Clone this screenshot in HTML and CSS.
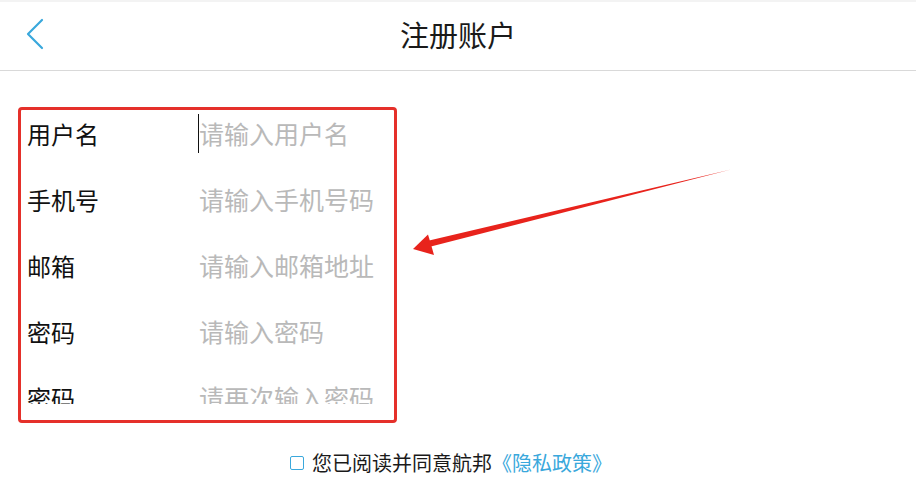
FILE: index.html
```html
<!DOCTYPE html>
<html lang="zh-CN">
<head>
<meta charset="UTF-8" />
<meta name="viewport" content="width=device-width, initial-scale=1" />
<title>注册账户</title>
<link rel="stylesheet" href="styles.css">
</head>
<body>

<header class="cabecera">
  <a class="volver" href="#">
    <svg width="20" height="32" viewBox="0 0 20 32">
      <polyline points="17,2 3,16 17,30" fill="none" stroke="#3aa8dc" stroke-width="2.2" stroke-linecap="round" stroke-linejoin="round"/>
    </svg>
  </a>
  <h1 class="titulo">注册账户</h1>
</header>

<main class="contenido">
  <div class="formulario">
    <div class="lista">
      <div class="fila">
        <span class="etiqueta">用户名</span>
        <span class="campo activo">请输入用户名</span>
      </div>
      <div class="fila">
        <span class="etiqueta">手机号</span>
        <span class="campo">请输入手机号码</span>
      </div>
      <div class="fila">
        <span class="etiqueta">邮箱</span>
        <span class="campo">请输入邮箱地址</span>
      </div>
      <div class="fila">
        <span class="etiqueta">密码</span>
        <span class="campo">请输入密码</span>
      </div>
      <div class="fila">
        <span class="etiqueta">密码</span>
        <span class="campo">请再次输入密码</span>
      </div>
    </div>
  </div>

  <div class="acuerdo">
    <span class="casilla"></span>
    <span>您已阅读并同意航邦</span><a class="enlace" href="#">《隐私政策》</a>
  </div>
</main>

<!-- flecha de anotación sobre la captura -->
<svg class="flecha" width="916" height="487" viewBox="0 0 916 487">
  <polygon points="429,247 427,241 731,169.5" fill="#e8231c"/>
  <polygon points="413,249 428,234.5 431,244.5 434,255" fill="#e8231c"/>
</svg>

</body>
</html>
```

FILE: styles.css
```css
html, body {
  margin: 0;
  height: 100%;
  background: #fff;
  font-family: "Noto Sans CJK SC", "Noto Sans", sans-serif;
  color: #111;
  overflow: hidden;
}

/* Barra superior */
.cabecera {
  position: relative;
  height: 68px;
  border-top: 2px solid #f3f3f3;
  border-bottom: 1px solid #d9d9d9;
  display: flex;
  align-items: center;
  justify-content: center;
}

.volver {
  position: absolute;
  left: 25px;
  top: 16px;
  display: flex;
}

.titulo {
  margin: 0 0 4px;
  font-size: 29px;
  font-weight: normal;
  line-height: 1;
  color: #1a1a1a;
}

.contenido {
  padding: 36px 0 0 18px;
}

/* Caja roja con los campos */
.formulario {
  width: 373px;
  height: 310px;
  border: 3px solid #e5302a;
  border-radius: 4px;
}

.lista {
  height: 294px;
  overflow: hidden;
  display: flex;
  flex-direction: column;
  gap: 14px;
  padding-left: 6px;
}

.fila {
  flex: 0 0 52px;
  display: flex;
  align-items: center;
  font-size: 24px;
  margin-top: -3px;
  margin-bottom: 3px;
}

.etiqueta {
  width: 172px;
  flex: 0 0 172px;
  color: #111;
}

.campo {
  color: #b9b9b9;
  font-size: 25px;
  position: relative;
}

.campo.activo::before {
  content: "";
  position: absolute;
  left: -1px;
  top: -1px;
  bottom: -2px;
  border-left: 1.5px solid #111;
}

/* Aceptación de la política */
.acuerdo {
  margin: 25px 0 0 -18px;
  display: flex;
  align-items: center;
  justify-content: center;
  font-size: 20px;
  color: #1a1a1a;
  padding-right: 14px;
}

.casilla {
  width: 12px;
  height: 12px;
  border: 1.5px solid #3aa8dc;
  border-radius: 2px;
  margin-right: 8px;
}

.enlace {
  color: #3aa8dc;
  text-decoration: none;
  font-size: 20px;
}

.flecha {
  position: fixed;
  top: 0;
  left: 0;
  pointer-events: none;
}
```
